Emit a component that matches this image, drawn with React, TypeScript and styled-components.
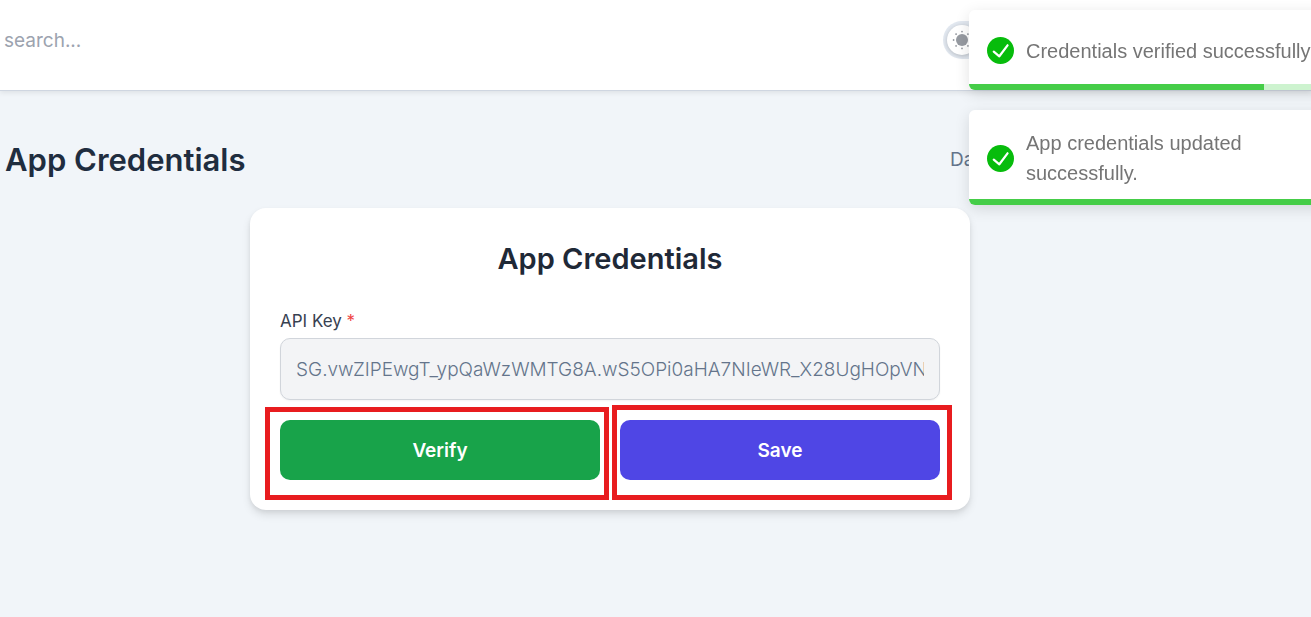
import React from "react";
import styled, { createGlobalStyle } from "styled-components";

const GlobalStyle = createGlobalStyle`
  * { box-sizing: border-box; }
  body {
    margin: 0;
    min-height: 100vh;
    overflow: hidden;
    background: #f1f5f9;
    color: #64748b;
    font-family: Inter, "Liberation Sans", sans-serif;
    font-size: 19px;
    line-height: 30px;
  }
  h1, h2, p, ol { margin: 0; padding: 0; }
  button, input { font: inherit; }
`;

const Header = styled.header`
  display: flex;
  align-items: center;
  justify-content: space-between;
  height: 91px;
  padding: 0 298px 10px 4px;
  background: #fff;
  border-bottom: 1px solid #cfd6e1;
  box-shadow: 0 2px 5px rgba(0, 0, 0, 0.08);
`;

const SearchInput = styled.input`
  width: 400px;
  height: 40px;
  padding: 0;
  border: 0;
  outline: 0;
  background: transparent;
  &::placeholder { color: #9ca3af; opacity: 1; }
`;

const ThemeToggle = styled.button`
  display: flex;
  align-items: center;
  width: 70px;
  height: 38px;
  padding: 0 4px;
  border: 0;
  border-radius: 19px;
  background: #e2e8f0;
`;

const Knob = styled.span`
  display: flex;
  align-items: center;
  justify-content: center;
  width: 30px;
  height: 30px;
  border-radius: 50%;
  background: #fff;
  box-shadow: 0 1px 4px rgba(0, 0, 0, 0.2);
`;

const Main = styled.main`
  padding: 45px 96px 45px 5px;
`;

const PageHead = styled.div`
  display: flex;
  align-items: center;
  justify-content: space-between;
  margin-bottom: 24px;
`;

const PageTitle = styled.h1`
  color: #1f2d3f;
  font-size: 31px;
  font-weight: 600;
  line-height: 48px;
`;

const Crumbs = styled.ol`
  display: flex;
  gap: 10px;
  width: 265px;
  list-style: none;
  white-space: nowrap;
  a { color: inherit; text-decoration: none; }
`;

const Card = styled.form`
  max-width: 720px;
  margin: 0 auto;
  padding: 30px;
  border-radius: 16px;
  background: #fff;
  box-shadow: 0 5px 8px rgba(0, 0, 0, 0.1), 0 2px 4px rgba(0, 0, 0, 0.06);
`;

const CardTitle = styled.h2`
  margin-bottom: 28px;
  color: #1f2937;
  font-size: 29px;
  font-weight: 600;
  line-height: 42px;
  text-align: center;
`;

const Label = styled.label`
  display: block;
  margin-bottom: 3px;
  color: #374151;
  font-size: 17px;
  line-height: 27px;
`;

const Required = styled.span`
  color: #ef4444;
`;

const KeyInput = styled.input`
  display: block;
  width: 100%;
  height: 62px;
  padding: 0 15px;
  border: 1px solid #d1d5db;
  border-radius: 10px;
  outline: 0;
  background: #f3f4f6;
  color: #64748b;
  font-weight: 300;
  box-shadow: 0 1px 2px rgba(0, 0, 0, 0.05);
`;

const Actions = styled.div`
  display: grid;
  grid-template-columns: 1fr 1fr;
  gap: 20px;
  margin-top: 20px;
`;

const Highlighted = styled.div<{ $inset: string }>`
  position: relative;
  &::after {
    content: "";
    position: absolute;
    inset: ${(p) => p.$inset};
    border: 5px solid #e81c1f;
    pointer-events: none;
  }
`;

const ActionButton = styled.button<{ $color: string }>`
  width: 100%;
  height: 60px;
  padding: 2px 0 0;
  border: 0;
  border-radius: 10px;
  background: ${(p) => p.$color};
  color: #fff;
  font-weight: 600;
`;

const Toasts = styled.section`
  position: fixed;
  top: 10px;
  right: -58px;
  display: flex;
  flex-direction: column;
  gap: 20px;
  width: 400px;
`;

const ToastBox = styled.div`
  position: relative;
  display: flex;
  align-items: center;
  gap: 12px;
  min-height: 80px;
  padding: 18px 40px 17px 18px;
  overflow: hidden;
  border-radius: 6px;
  background: #fff;
  color: #757575;
  font-family: "Liberation Sans", Arial, sans-serif;
  font-size: 20px;
  box-shadow: 0 4px 15px rgba(0, 0, 0, 0.12);
  svg { flex: none; }
`;

const Track = styled.div`
  position: absolute;
  inset: auto 0 0 0;
  height: 6px;
  background: #cdf3cf;
`;

const Bar = styled.div`
  height: 100%;
  background: #45cd48;
`;

function SunIcon() {
  const rays = [0, 45, 90, 135, 180, 225, 270, 315];
  return (
    <svg width="20" height="20" viewBox="0 0 20 20" fill="#969aa1" aria-hidden="true">
      <circle cx="10" cy="10" r="6" />
      {rays.map((angle) => (
        <circle key={angle} cx="10" cy="1.6" r="0.9" transform={`rotate(${angle} 10 10)`} />
      ))}
    </svg>
  );
}

function CheckIcon() {
  return (
    <svg width="27" height="27" viewBox="0 0 28 28" aria-hidden="true">
      <circle cx="14" cy="14" r="14" fill="#07bc0c" />
      <path d="M7 15.2l5.8 4.8L21.3 8.6" fill="none" stroke="#fff" strokeWidth="2.3" strokeLinecap="round" strokeLinejoin="round" />
    </svg>
  );
}

function Toast({ text, progress }: { text: string; progress: number }) {
  return (
    <ToastBox role="alert">
      <CheckIcon />
      <p>{text}</p>
      <Track>
        <Bar style={{ width: `${progress}%` }} />
      </Track>
    </ToastBox>
  );
}

export default function App() {
  return (
    <>
      <GlobalStyle />
      <Header>
        <SearchInput type="search" placeholder="search..." aria-label="Search" />
        <ThemeToggle type="button" aria-label="Toggle theme">
          <Knob>
            <SunIcon />
          </Knob>
        </ThemeToggle>
      </Header>
      <Main>
        <PageHead>
          <PageTitle>App Credentials</PageTitle>
          <Crumbs>
            <li><a href="#dashboard">Da</a></li>
          </Crumbs>
        </PageHead>
        <Card onSubmit={(e) => e.preventDefault()}>
          <CardTitle>App Credentials</CardTitle>
          <Label htmlFor="api-key">
            API Key <Required>*</Required>
          </Label>
          <KeyInput
            id="api-key"
            type="text"
            required
            defaultValue="SG.vwZIPEwgT_ypQaWzWMTG8A.wS5OPi0aHA7NIeWR_X28UgHOpVN"
          />
          <Actions>
            <Highlighted $inset="-13px -9px -20px -15px">
              <ActionButton type="button" $color="#18a34a">Verify</ActionButton>
            </Highlighted>
            <Highlighted $inset="-15px -12px -20px -8px">
              <ActionButton type="submit" $color="#4f46e5">Save</ActionButton>
            </Highlighted>
          </Actions>
        </Card>
      </Main>
      <Toasts aria-label="Notifications">
        <Toast text="Credentials verified successfully" progress={73.75} />
        <Toast text="App credentials updated successfully." progress={100} />
      </Toasts>
    </>
  );
}
